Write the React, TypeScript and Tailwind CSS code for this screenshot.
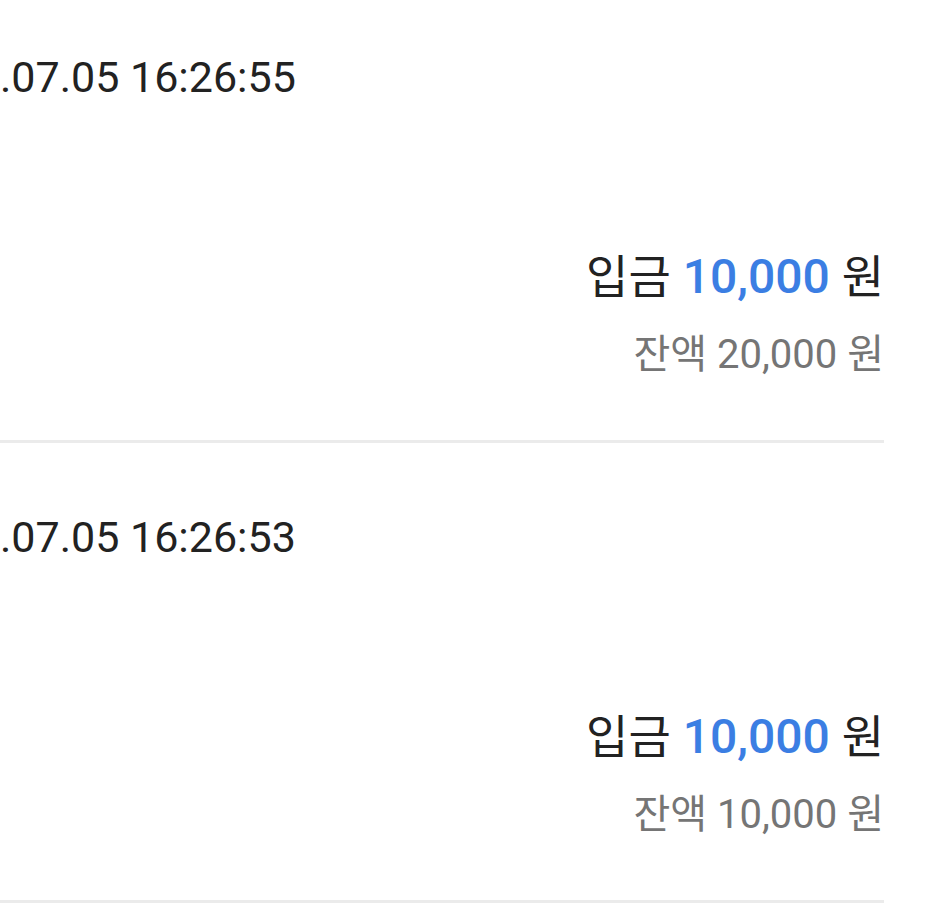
type Entry = {
    time: string,
    amount: string,
    balance: string
}

const entries: Entry[] = [
    {time: '.07.05 16:26:55', amount: '10,000', balance: '20,000'},
    {time: '.07.05 16:26:53', amount: '10,000', balance: '10,000'},
]

const font = {fontFamily: 'Roboto, "Noto Sans CJK KR", sans-serif'}

function EntryRow(props: {entry: Entry}) {
    return (
        <div className="mr-[56px] pt-[66px] pb-[59px] border-b-[3px] border-[#ebebeb]">
            <p className="text-[43px] leading-[56px] text-[#222222] whitespace-nowrap">
                {props.entry.time}
            </p>
            <p className="mt-[142px] text-right text-[48px] leading-[60px] text-[#222222] whitespace-nowrap">
                <span className="text-[46px]">입금</span>{' '}
                <span className="font-medium text-[#3b7ee3]">{props.entry.amount}</span>{' '}
                <span className="text-[46px]">원</span>
            </p>
            <p className="mt-[22px] text-right text-[40px] leading-[52px] text-[#757575] whitespace-nowrap">
                잔액 {props.entry.balance} 원
            </p>
        </div>
    )
}

export default function App() {
    return (
        <div className="w-[940px] h-[904px] overflow-hidden bg-white" style={font}>
            <div className="-mt-[17px]">
                {entries.map((e, i) => (
                    <EntryRow key={i} entry={e} />
                ))}
            </div>
        </div>
    )
}
